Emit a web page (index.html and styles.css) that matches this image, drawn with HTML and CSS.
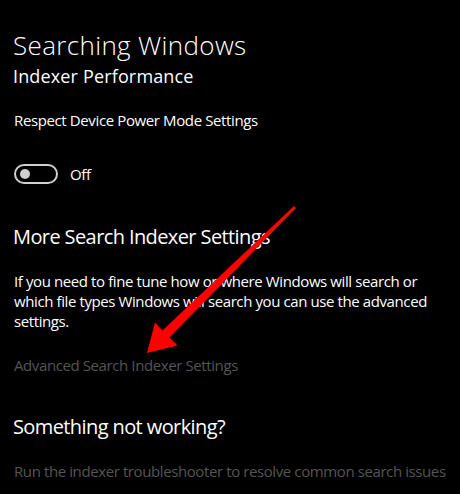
FILE: index.html
```html
<!DOCTYPE html>
<html lang="en">
<head>
<meta charset="utf-8">
<title>Searching Windows</title>
<link rel="stylesheet" href="styles.css">
</head>
<body>
<main class="page">
  <h1 class="title">Searching Windows</h1>
  <h2 class="subtitle">Indexer Performance</h2>
  <p class="label">Respect Device Power Mode Settings</p>
  <div class="toggle-row">
    <span class="toggle"><span class="knob"></span></span>
    <span class="toggle-text">Off</span>
  </div>
  <h3 class="section">More Search Indexer Settings</h3>
  <p class="desc">If you need to fine tune how or where Windows will search or which file types Windows will search you can use the advanced settings.</p>
  <a class="link">Advanced Search Indexer Settings</a>
  <h3 class="section section-2">Something not working?</h3>
  <a class="link link-2">Run the indexer troubleshooter to resolve common search issues</a>
</main>
<svg class="arrow" width="460" height="494" viewBox="0 0 460 494" aria-hidden="true">
  <polygon points="296,208 169.5,337.6 177.5,345.5 147,353 155,322.5 162.5,330.4 294,206" fill="#ff0000"/>
</svg>
</body>
</html>
```
FILE: styles.css
```css
html, body {
  margin: 0;
  padding: 0;
  background: #000;
}
body {
  position: relative;
  width: 460px;
  height: 494px;
  overflow: hidden;
  font-family: "Open Sans", "Noto Sans", sans-serif;
  color: #fff;
}
.page {
  display: flex;
  flex-direction: column;
  align-items: flex-start;
  padding: 29px 0 0 13px;
}
.title {
  margin: 0;
  font-size: 26px;
  line-height: 32px;
  font-weight: 300;
  letter-spacing: 0.35px;
}
.subtitle {
  margin: 3px 0 0;
  font-size: 18px;
  line-height: 24px;
  font-weight: 400;
  letter-spacing: 0.15px;
}
.label {
  margin: 22px 0 0 1px;
  font-size: 15px;
  line-height: 20px;
  letter-spacing: -0.38px;
}
.toggle-row {
  margin: 34px 0 0 1px;
  display: flex;
  align-items: center;
  gap: 12px;
  height: 20px;
}
.toggle {
  box-sizing: border-box;
  width: 44px;
  height: 20px;
  border: 2px solid #cfcfcf;
  border-radius: 10px;
  display: flex;
  align-items: center;
  padding-left: 4px;
}
.knob {
  width: 10px;
  height: 10px;
  border-radius: 50%;
  background: #cfcfcf;
}
.toggle-text {
  font-size: 15px;
  line-height: 20px;
  letter-spacing: -0.4px;
}
.section {
  margin: 39px 0 0;
  font-size: 20px;
  line-height: 28px;
  font-weight: 400;
  letter-spacing: -0.6px;
}
.desc {
  margin: 20px 0 0 1px;
  width: 425px;
  font-size: 15px;
  line-height: 20px;
  letter-spacing: -0.4px;
}
.link {
  margin: 24px 0 0 1px;
  font-size: 15px;
  line-height: 20px;
  color: #555;
  letter-spacing: -0.4px;
}
.section-2 {
  margin-top: 38px;
}
.link-2 {
  margin-top: 20px;
  white-space: nowrap;
}
.arrow {
  position: absolute;
  left: 0;
  top: 0;
}
```
